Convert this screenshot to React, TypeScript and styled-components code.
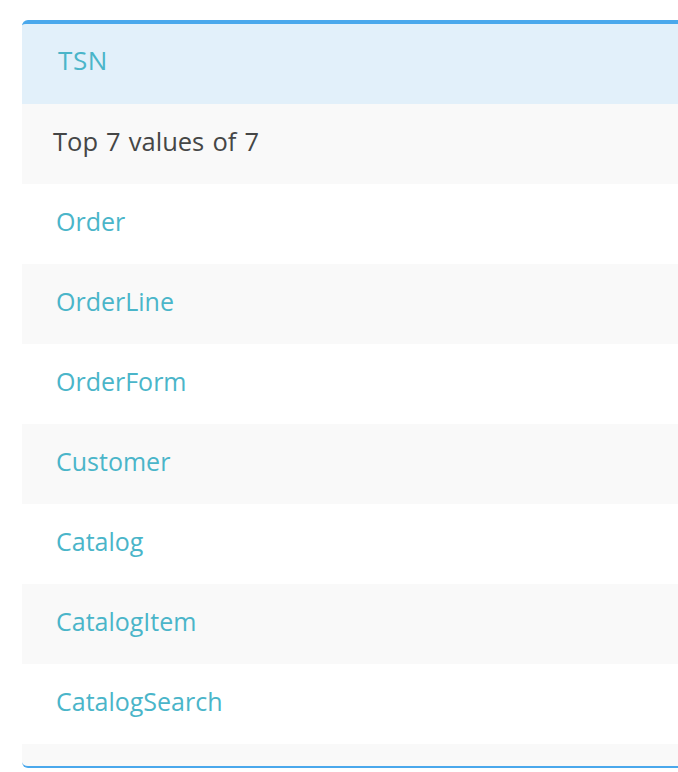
import React from "react";
import styled, { createGlobalStyle } from "styled-components";

const Global = createGlobalStyle`
  html, body { margin: 0; padding: 0; background: #ffffff; overflow: hidden; }
  body { font-family: "Open Sans", "DejaVu Sans", sans-serif; }
`;

const Page = styled.div`
  width: 678px;
  height: 772px;
  padding: 20px 0 0 22px;
  box-sizing: border-box;
  overflow: hidden;
`;

const Panel = styled.section`
  width: 720px;
  border-top: 4px solid #4aa8ec;
  border-bottom: 2px solid #4aa8ec;
  border-radius: 6px;
  overflow: hidden;
  background: #f9f9f9;
  display: flex;
  flex-direction: column;
  padding-bottom: 22px;
`;

const Cell = styled.div`
  height: 80px;
  box-sizing: border-box;
  display: flex;
  align-items: center;
  padding-bottom: 6px;
  font-size: 25px;
`;

const Header = styled(Cell)`
  padding-left: 36px;
  padding-bottom: 8px;
  background: #e2f0fa;
  color: #4ab5c9;
  font-size: 26px;
  letter-spacing: 0.6px;
`;

const Title = styled(Cell)`
  padding-left: 31px;
  background: #f9f9f9;
  color: #454646;
  font-size: 25.5px;
  font-weight: 500;
  word-spacing: 1.5px;
`;

const Row = styled(Cell)<{ $alt: boolean }>`
  padding-left: 34px;
  background: ${(p) => (p.$alt ? "#f9f9f9" : "#ffffff")};
  color: #4ab5c9;
`;

const values = [
  "Order",
  "OrderLine",
  "OrderForm",
  "Customer",
  "Catalog",
  "CatalogItem",
  "CatalogSearch",
];

export default function App() {
  return (
    <Page>
      <Global />
      <Panel>
        <Header>TSN</Header>
        <Title>Top 7 values of 7</Title>
        {values.map((v, i) => (
          <Row key={v} $alt={i % 2 === 1}>
            {v}
          </Row>
        ))}
      </Panel>
    </Page>
  );
}
